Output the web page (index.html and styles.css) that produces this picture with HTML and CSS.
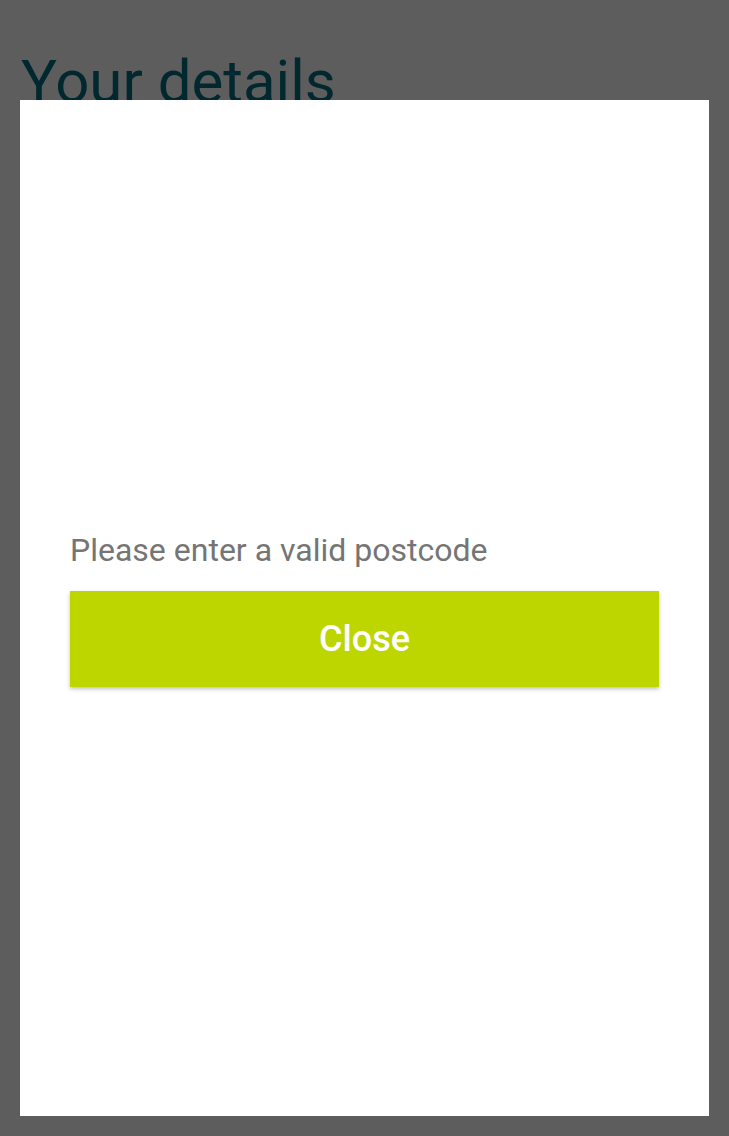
FILE: index.html
```html
<!DOCTYPE html>
<html>
<head>
<meta charset="utf-8">
<link rel="stylesheet" href="styles.css">
</head>
<body>
<div class="page">
  <h1 class="title">Your details</h1>
</div>
<div class="overlay">
  <div class="modal">
    <p class="message">Please enter a valid postcode</p>
    <button class="close-btn">Close</button>
  </div>
</div>
</body>
</html>
```

FILE: styles.css
```css
html, body {
  margin: 0;
  padding: 0;
  width: 729px;
  height: 1136px;
  overflow: hidden;
  background: #5d5d5d;
  font-family: Roboto, "Noto Sans", sans-serif;
}
.page {
  padding: 47px 21px 0;
}
.title {
  margin: 0;
  font-size: 60px;
  font-weight: 400;
  line-height: 70px;
  color: #00282e;
}
.overlay {
  position: absolute;
  inset: 0;
  padding: 100px 20px 20px;
  box-sizing: border-box;
  display: flex;
}
.modal {
  flex: 1;
  background: #ffffff;
  padding: 0 50px;
  display: flex;
  flex-direction: column;
  justify-content: center;
}
.message {
  margin: 0 0 20px;
  font-size: 32px;
  line-height: 42px;
  color: #757575;
}
.close-btn {
  height: 96px;
  border: none;
  background: #bed600;
  color: #ffffff;
  font-family: Roboto, "Noto Sans", sans-serif;
  font-size: 36px;
  font-weight: 500;
  box-shadow: 0 2px 4px rgba(0,0,0,0.25);
}
```
